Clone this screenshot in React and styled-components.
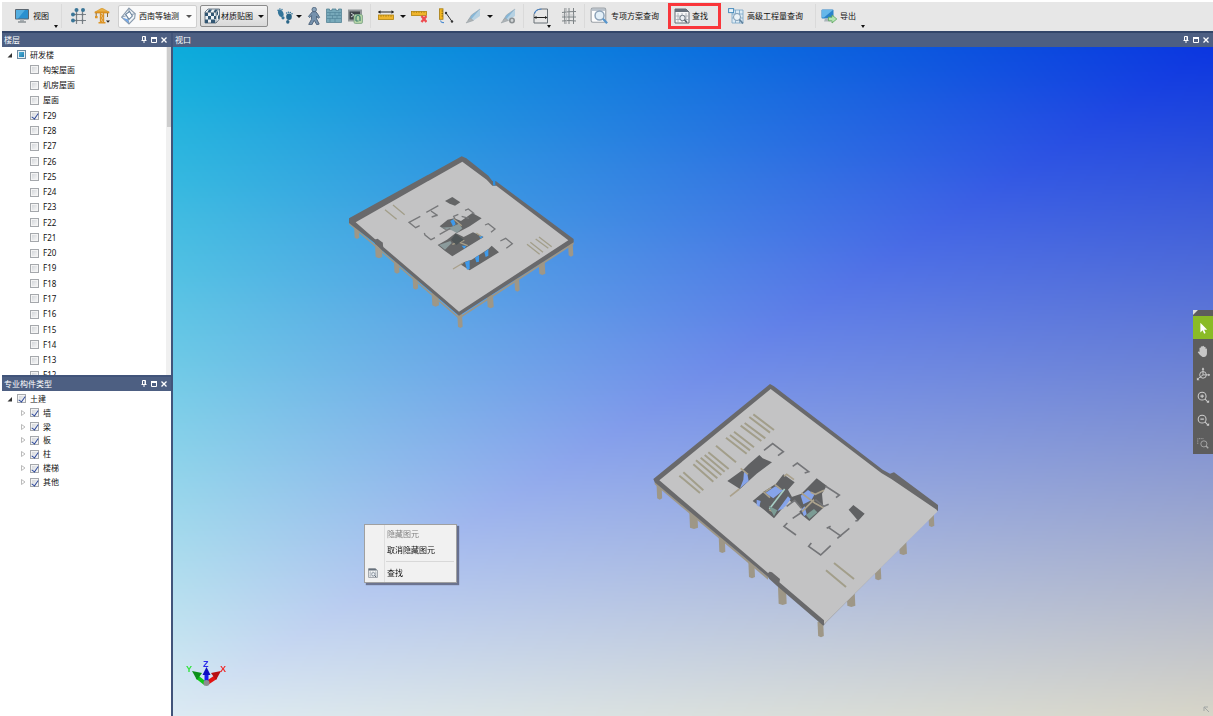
import React, { useLayoutEffect, useRef } from "react";
import styled, { createGlobalStyle } from "styled-components";

const floors = ["构架屋面", "机房屋面", "屋面"];
for (let n = 29; n >= 12; n--) floors.push(`F${n}`);

const parts = ["墙", "梁", "板", "柱", "楼梯", "其他"];

/* ---------- icons ---------- */

const Icon = ({ children, size = 16 }) => (
  <svg width={size} height={size} viewBox="0 0 16 16" fill="none" aria-hidden="true">
    {children}
  </svg>
);

const MonitorIcon = () => (
  <Icon>
    <rect x="1" y="1" width="14" height="10.5" rx="1" fill="#5b6670" />
    <rect x="2" y="2" width="12" height="8.5" fill="#2a90cf" />
    <path d="M2 2h9l-7 8.500H2z" fill="#53aee0" />
    <path d="M6 11.5h4v2H6z" fill="#aab0b4" />
    <path d="M4 14h8" stroke="#848b90" strokeWidth="1.4" />
  </Icon>
);

const AxisGridIcon = () => (
  <Icon>
    <path d="M5.5 3v13M11.5 3v13M2 6.5h13M2 12.5h13" stroke="#7d8489" strokeWidth="1.2" />
    <g fill="#3a7597">
      <circle cx="5.5" cy="2" r="2" />
      <circle cx="12" cy="2" r="2" />
      <circle cx="2" cy="6.5" r="2" />
      <circle cx="2" cy="12.5" r="2" />
    </g>
    <g fill="#6d757b">
      <circle cx="5.5" cy="6.5" r="1" />
      <circle cx="11.5" cy="6.5" r="1" />
      <circle cx="5.5" cy="12.5" r="1" />
      <circle cx="11.5" cy="12.5" r="1" />
    </g>
  </Icon>
);

const CraneIcon = () => (
  <Icon>
    <path d="M6.5 3v12M9.5 3v12M6.5 6l3 2-3 2 3 2-3 2" stroke="#dd9425" strokeWidth="1.3" />
    <path d="M8 0L.8 4.2h14.4z" fill="#eab044" stroke="#d08e22" strokeWidth=".6" />
    <path d="M.8 4.5h14.4" stroke="#d9901f" strokeWidth="1.7" />
    <path d="M2.2 5v3.4M13.5 5v4" stroke="#8b6b35" />
    <path d="M1 8h2.6v2.2H1zM4.5 14h7v1.6h-7z" fill="#dd9425" />
    <path d="M12 12.5h4l-2 2.3z" fill="#222" />
  </Icon>
);

const IsoViewIcon = () => (
  <Icon size={18}>
    <path d="M8 1l5.500 5-.5 4L8 15 1.500 9z" fill="#f1f5f8" stroke="#8a9bad" />
    <path d="M8 1v6l5.500-1M8 7l-1 4 1 4M8 7L1.500 9" stroke="#8a9bad" strokeWidth=".9" />
    <path d="M2 9.300L7 11l1 3.500z" fill="#6ca4ea" />
    <path d="M5 6.500L8.500 4l2.500 4-3 3z" fill="#fff" stroke="#65809c" strokeWidth=".9" />
  </Icon>
);

const TextureIcon = () => (
  <Icon>
    <path d="M4 1h11.5v10L12 15H1V4z" fill="#eef2f5" stroke="#4c5e6d" strokeWidth=".8" />
    <path
      d="M1 5h3v3H1zM7 5h3v3H7zM4 8h3v3.5H4zM1 11.5h3V15H1zM7 11.5h4V15H7zM10 8h2v3h-2zM12.5 4.500L14 3v3.500L12.500 8zM14 8l1.500-1.500V10L14 11.500zM5 1.5h3L6.5 4h-3zM11 1.5h3L12 4H9.500z"
      fill="#315673"
    />
    <path d="M12 4.5V15M12 4.500L15.500 1M1 4.5h11" stroke="#4c5e6d" strokeWidth=".6" />
  </Icon>
);

const FootprintIcon = () => (
  <Icon>
    <ellipse cx="3.8" cy="5.4" rx="2.6" ry="3.6" transform="rotate(-22 3.8 5.4)" fill="#34759a" />
    <circle cx="6" cy="9.8" r="1.6" fill="#34759a" />
    <ellipse cx="12" cy="8.8" rx="2.8" ry="3.3" fill="#2b6688" />
    <ellipse cx="10.8" cy="13.8" rx="1.7" ry="1.9" fill="#2b6688" />
    <g fill="#34759a">
      <circle cx="1.2" cy="2.3" r=".9" />
      <circle cx="2.9" cy="1.1" r=".8" />
      <circle cx="5" cy="1.5" r=".7" />
      <circle cx="9.6" cy="5" r=".8" />
      <circle cx="11.4" cy="4.2" r=".8" />
      <circle cx="13.3" cy="4.5" r=".8" />
      <circle cx="15" cy="5.8" r=".8" />
    </g>
  </Icon>
);

const PersonIcon = () => (
  <Icon size={18}>
    <circle cx="8.200" cy="2.3" r="2" fill="#8aa4bb" stroke="#4b6179" strokeWidth=".7" />
    <path
      d="M6.500 4.200h3.200l1.500 2 1.800 3-1.200.8-1.600-2 .1 2.500 2.300 4.700-2 .7-2.400-4-2.200 4-2.700-.4 2.400-4.400.2-3.500-1.800 1.800-1-1z"
      fill="#7692ad"
      stroke="#4b6179"
      strokeWidth=".8"
    />
  </Icon>
);

const WallIcon = () => (
  <Icon>
    <path d="M.5 1h3v1.500H6V1h4v1.500h2.500V1h3v13.500H.5z" fill="#77a9ba" stroke="#548396" strokeWidth=".8" />
    <path
      d="M1 4.500h14M1 7.500h14M1 10.500h14M4 4.500v3M9 4.500v3M13 4.500v3M6.500 7.500v3M11 7.500v3M4 10.500V14M9 10.500V14"
      stroke="#4e8095"
      strokeWidth=".6"
    />
  </Icon>
);

const SnapshotIcon = () => (
  <Icon>
    <rect x="1" y="1.5" width="14" height="12" fill="#92979a" />
    <rect x="2.5" y="3.5" width="10.5" height="8" fill="#3d4348" />
    <path d="M4 5l3 2-3 2" stroke="#cdd3d6" />
    <rect x="7" y="6.500" width="8.500" height="9" rx="1.500" fill="#b4d3a6" stroke="#7ba587" strokeWidth=".8" />
    <path d="M9 13V9.500a2 2 0 014 0V13M9 13h2.500" stroke="#3f8271" strokeWidth="1.2" />
  </Icon>
);

const RulerIcon = () => (
  <Icon>
    <path d="M.5 4h15" stroke="#222" />
    <path d="M0 4l2.500-1.700v3.400zM16 4l-2.500-1.700v3.400z" fill="#222" />
    <rect x=".5" y="7" width="15" height="4.500" fill="#f0b52c" stroke="#b2820b" strokeWidth=".8" />
    <path d="M3 7v2M5.500 7v1.500M8 7v2M10.500 7v1.500M13 7v2" stroke="#a37c16" strokeWidth=".7" />
  </Icon>
);

const RulerRemoveIcon = () => (
  <Icon>
    <rect x=".5" y="3.5" width="15" height="4" fill="#f0b52c" stroke="#b2820b" strokeWidth=".8" />
    <path d="M3 3.500v1.500M5.500 3.500v1.500M8 3.500v1.500M10.500 3.500v1.500M13 3.500v1.500" stroke="#a37c16" strokeWidth=".7" />
    <path d="M10.500 8l5 6M15.500 8l-5 6" stroke="#ee4b50" strokeWidth="2.400" />
  </Icon>
);

const MeasureIcon = () => (
  <Icon>
    <rect x="1.500" y=".8" width="3.500" height="10.500" fill="#f4b71f" stroke="#a37b13" strokeWidth=".8" />
    <path d="M3.500 3H5M3.500 5.500H5M3.500 8H5" stroke="#7e6114" strokeWidth=".8" />
    <path d="M2.500 12.500q.5 2.500 3.500 2" stroke="#4b8bd0" strokeWidth="1.1" />
    <path d="M8 5l6 8.500" stroke="#333" />
    <circle cx="8" cy="5" r="1.200" fill="#333" />
    <circle cx="14" cy="13.500" r="1.200" fill="#333" />
  </Icon>
);

const BladeIcon = ({ gear }) => (
  <Icon>
    <path d="M15 1L6.500 7 3 12.500l5-1z" fill="#86b7d8" stroke="#93a2ad" strokeWidth=".6" />
    <path d="M15 1v7l-6.500 4.500L1 15l5-3.500z" fill="#b6d1e2" />
    <path d="M1 15l4-5 3.500 2.500z" fill="#adb2b5" stroke="#9aa0a3" strokeWidth=".5" />
    {gear && <circle cx="12" cy="12.5" r="2.200" fill="#d2d6d8" stroke="#8b9194" strokeWidth="1.600" />}
  </Icon>
);

const ArcIcon = () => (
  <Icon>
    <path d="M1 15V6.500Q2 1 9 1h5.500v14z" stroke="#687076" />
    <path d="M1.500 5.500Q3 1.200 8.500 1" stroke="#4a87cc" strokeWidth="1.2" />
    <path d="M1 9.500h13" stroke="#222" />
    <path d="M1 9.500l2.500-1.500v3zM14.500 9.500L12 8v3z" fill="#222" />
  </Icon>
);

const MeshIcon = () => (
  <Icon>
    <path d="M4 0q-1 8 0 16M8 0v16M12.500 0v16M1 4.500q6-1 14-1M1 9h14M1 13q7-1 14 0" stroke="#7d8386" />
    <path d="M5.500 0v16M1 7h13" stroke="#b2b5b7" strokeWidth=".7" />
  </Icon>
);

const PlanSearchIcon = () => (
  <Icon size={18}>
    <rect x="1" y="1" width="13" height="12.5" rx="1.500" fill="#fdfdfd" stroke="#9aa0a6" />
    <rect x="1.500" y="1.500" width="12" height="2" fill="#b9c2cb" />
    <circle cx="8.500" cy="7.500" r="4" fill="#e2eff8" stroke="#8ba1b7" strokeWidth="1.300" />
    <path d="M11.500 10.500l3.700 4" stroke="#5795cc" strokeWidth="2" />
  </Icon>
);

const FindIcon = ({ size }) => (
  <Icon size={size}>
    <path d="M1 1h11l3 3v11H1z" fill="#f5f6f7" stroke="#656d77" />
    <path d="M1 1h11l2.500 3H1z" fill="#66707c" />
    <path d="M4 5v10M8 5v10M12 5v10M1 8h14M1 11.500h14" stroke="#a3abb3" strokeWidth=".8" />
    <circle cx="8.500" cy="10" r="2.700" fill="#ecf0f4" stroke="#6b7783" />
    <path d="M10.500 12l2.500 2.500" stroke="#505c68" strokeWidth="1.500" />
  </Icon>
);

const QuantityIcon = () => (
  <Icon>
    <path d="M4 2h11v13H4z" fill="#dcebf5" stroke="#78a5c5" strokeWidth=".8" />
    <path d="M7.500 2v13M11.500 2v13M4 6h11M4 10h11" stroke="#78a5c5" strokeWidth=".8" />
    <rect x=".6" y=".6" width="5" height="4" fill="#e8f3fa" stroke="#4b8dbc" />
    <circle cx="9" cy="9" r="3.500" fill="#ebf3f8" stroke="#7e9ab2" />
    <path d="M11.500 11.500l3.500 4" stroke="#61839f" strokeWidth="1.700" />
  </Icon>
);

const ExportIcon = () => (
  <Icon>
    <rect x=".5" y="1.500" width="12" height="9" rx="1" fill="#2a83ca" />
    <path d="M1 2h11L3 9.500H1z" fill="#65b7ea" />
    <path d="M4 10.500h5l1 3H3z" fill="#a9b4ba" />
    <path d="M7.500 9.200H11V7l4.800 4-4.800 4v-2.200H7.500z" fill="#b2e5b0" stroke="#5ca35e" strokeWidth=".8" />
  </Icon>
);

const PinIcon = () => (
  <svg width="6" height="8" viewBox="0 0 6 8" fill="none" aria-hidden="true">
    <path d="M1.500 4V.5h3V4M4 .5V4M.5 4.500h5M3 4.500V7" stroke="#fff" />
  </svg>
);

const RestoreIcon = () => (
  <svg width="6" height="6" viewBox="0 0 6 6" fill="none" aria-hidden="true">
    <path d="M.5 1h5v4.500h-5z" stroke="#fff" />
    <path d="M0 1h6" stroke="#fff" strokeWidth="2" />
  </svg>
);

const CloseIcon = () => (
  <svg width="6" height="6" viewBox="0 0 6 6" fill="none" aria-hidden="true">
    <path d="M.5.5l5 5M5.5.5l-5 5" stroke="#fff" strokeWidth="1.3" />
  </svg>
);

const Twisty = ({ open }) => (
  <svg width="6" height="6" viewBox="0 0 6 6" fill="none" aria-hidden="true">
    {open ? <path d="M5 1v4.500H.5z" fill="#333" /> : <path d="M1.500.5l3.500 2.500-3.500 2.500z" fill="#fff" stroke="#aaa" strokeWidth=".8" />}
  </svg>
);

/* ---------- viewport scene ---------- */

const corners = {
  tl: [12, 172, 219],
  tr: [11, 54, 224],
  bl: [220, 234, 243],
  br: [215, 213, 200]
};

// two gouraud triangles that share the top-right / bottom-left edge
const paintSky = canvas => {
  const { width: w, height: h } = canvas;
  const ctx = canvas.getContext("2d");
  const image = ctx.createImageData(w, h);
  const { tl, tr, bl, br } = corners;
  for (let y = 0; y < h; y++) {
    for (let x = 0; x < w; x++) {
      const u = x / (w - 1);
      const v = y / (h - 1);
      const at = (y * w + x) * 4;
      for (let c = 0; c < 3; c++) {
        image.data[at + c] =
          u + v < 1
            ? tl[c] + u * (tr[c] - tl[c]) + v * (bl[c] - tl[c])
            : br[c] + (1 - u) * (bl[c] - br[c]) + (1 - v) * (tr[c] - br[c]);
      }
      image.data[at + 3] = 255;
    }
  }
  ctx.putImageData(image, 0, 0);
};

const DARK = "#69696b";
const LIGHT = "#c3c3c4";
const TAN = "#9e9787";
const BEAM = "#a29e8a";

const Columns = ({ items }) =>
  items.map(([x, y1, y2, w]) => (
    <path key={x} d={`M${x - w / 2} ${y1}H${x + w / 2}L${x + w / 2 + 2} ${y2 - 4}L${x + 2} ${y2}L${x - w / 2 + 2} ${y2 - 4}Z`} fill={TAN} />
  ));

const UpperSlab = () => (
  <g transform="translate(335 145) scale(.33333)">
    <Columns
      items={[
        [64, 240, 282, 14],
        [130, 298, 340, 20],
        [184, 345, 386, 15],
        [240, 392, 434, 15],
        [300, 442, 485, 20],
        [374, 506, 549, 14],
        [465, 450, 490, 18],
        [545, 400, 440, 14],
        [620, 350, 390, 18],
        [706, 290, 335, 14]
      ]}
    />
    <path d="M42 232L372 516 716 290V298L372 522 42 238Z" fill={TAN} />
    <path d="M42 220L380 34 394 40 460 92 472 108H482L716 282V292L372 512 140 315 120 295 42 234Z" fill={DARK} />
    <path d="M62 232L382 50 455 104 472 122H484L700 286 372 500 145 306 142 292 122 284Z" fill={LIGHT} />
    <path d="M474 104L481 108V122L474 120Z" fill="#2c8edf" />
    <path d="M118 284L128 281 143 293V314L120 296Z" fill={DARK} />
    <path
      d="M150 194L185 223M174 180L209 209M576 298L614 328M586 292L624 322M602 282L640 310M612 276L650 305"
      stroke={BEAM}
      strokeWidth="4"
    />
    <g fill="#646566">
      <path d="M330 168L352 156 376 172 360 182 344 176Z" />
      <path d="M314 244L338 224 358 220 378 228 412 204 440 220 404 244 366 264 350 252 330 254Z" />
      <path d="M308 300L336 284 362 264 386 276 414 262 446 276 352 334 330 318Z" />
      <path d="M376 358L390 350 410 344 460 312 470 302 492 322 404 376Z" />
    </g>
    <g fill="#3e9aeb">
      <path d="M346 228L356 222 362 238 354 244Z" />
      <path d="M380 302L394 302 388 312ZM432 274L444 274 438 282Z" />
      <path d="M390 352L404 346 404 372 396 374ZM420 338L432 330 432 350 424 352ZM448 322L460 312 460 332 452 336Z" />
    </g>
    <g fill="#8b9b9c">
      <path d="M318 248L348 246 372 236 382 250 366 264 350 256Z" />
      <path d="M312 300L346 288 350 294 330 314Z" />
    </g>
    <path
      d="M356 222L380 242M352 298L388 286M424 264L438 274M354 372L384 354M374 292L398 302"
      stroke="#a9a08a"
      strokeWidth="4"
    />
    <path
      d="M274 202L310 182M288 198L308 212M290 216L308 210M256 214L222 232 242 248 254 242M268 264L270 270 288 284 300 278M390 196L400 192 418 206M450 240L460 236 480 252 468 262M496 288L512 280 532 296 514 310M314 268L346 250M360 222L356 214 370 208M380 214L402 220"
      stroke="#77787a"
      strokeWidth="4"
      fill="none"
    />
    <path d="M348 284L362 266 386 284 364 300Z" fill="#4e5557" />
  </g>
);

const LowerSlab = () => (
  <g transform="translate(640 375) scale(.33333)">
    <Columns
      items={[
        [57, 325, 374, 15],
        [160, 412, 462, 24],
        [245, 480, 534, 18],
        [334, 560, 610, 18],
        [426, 635, 690, 24],
        [541, 740, 787, 17],
        [873, 410, 456, 16],
        [788, 500, 540, 22],
        [713, 575, 616, 18],
        [632, 650, 696, 24]
      ]}
    />
    <path d="M44 320L384 606V614L44 328Z" fill={TAN} />
    <path d="M40 312L390 27 402 34 728 284 750 296 762 292 894 390V406L560 740 550 752 412 634 388 612 384 606 44 322Z" fill={DARK} />
    <path d="M58 316L392 42 724 294 754 312 890 404 892 410 552 748V736L418 622V612L390 590 384 594Z" fill={LIGHT} />
    <path d="M388 590L396 592 420 612 416 628 388 608Z" fill={DARK} />
    <path
      d="M118 302L180 354M130 292L190 346M160 268L220 320M168 256L232 310M182 248L244 300M194 240L254 290M205 232L266 282M228 212L288 262M258 188L320 236M270 180L330 226M282 170L342 217M302 152L364 198M314 144L376 190M328 126L390 173M340 118L402 165M582 564L642 612M558 586L618 636"
      stroke={BEAM}
      strokeWidth="6"
    />
    <g fill="#606163">
      <path d="M262 318L312 282 326 268 358 240 368 250 396 262 350 296 326 318 300 342Z" />
      <path d="M338 378L374 348 408 326 430 298 464 322 444 344 456 366 402 430 374 406Z" />
      <path d="M444 370L484 356 530 310 560 332 546 356 550 398 508 438 486 420Z" />
      <path d="M640 390L674 416 654 438 648 430 626 404Z" />
    </g>
    <g fill="#86a4ea">
      <path d="M312 290L322 296 326 318 300 340 310 314Z" />
      <path d="M376 354L406 334 430 346 400 370ZM350 374L362 378 358 396 350 390ZM412 408L444 364 452 372 432 400Z" />
      <path d="M482 362L504 345 524 358 514 376 490 388ZM484 404L494 394 500 418 492 424Z" />
    </g>
    <path
      d="M270 364L298 342M302 280L324 298M376 350L394 338M404 328L424 344M432 304L440 298 462 314M388 404L404 412M484 354L524 384 550 398M512 352L526 358 552 346M486 410L522 374M370 350L390 368"
      stroke="#aaa18c"
      strokeWidth="5"
      fill="none"
    />
    <path d="M388 402L434 342" stroke="#a7cdc4" strokeWidth="5" />
    <path d="M386 392L412 406 402 424ZM498 420L522 402 532 412 508 432Z" fill="#7b9b94" />
    <path d="M430 398L466 378 486 402 458 430Z" fill={LIGHT} />
    <path
      d="M372 226L398 206 430 230 414 242M458 274L472 264 506 290 494 294M556 333L598 360 588 368M526 374L552 394 566 388M440 394L464 376 484 400M458 430L482 414M442 444L432 454 468 480M514 504L506 514 542 540 572 512M560 460L572 454M566 458L604 484M592 490L628 460M654 436L646 438"
      stroke="#747578"
      strokeWidth="5"
      fill="none"
    />
  </g>
);

const AxisTriad = () => (
  <g>
    <path d="M206 684L197 677" stroke="#10c818" strokeWidth="4" />
    <path d="M192 671L202 673 197 680Z" fill="#0b8f1a" />
    <path d="M207 683L216 677" stroke="#e21313" strokeWidth="4" />
    <path d="M221 671L211 673 216 680Z" fill="#b80f12" />
    <path d="M206.500 684V673" stroke="#1717ee" strokeWidth="4" />
    <path d="M206.500 667L202.500 675H210.500Z" fill="#0d0dc2" />
    <circle cx="206.500" cy="683" r="3" fill="#8b8d90" />
    <g fontFamily="Liberation Sans, sans-serif" fontSize="9" fontWeight="bold">
      <text x="186" y="672" fill="#2fe33b">Y</text>
      <text x="203" y="667" fill="#2b2bea">Z</text>
      <text x="220" y="672" fill="#ef2b2b">X</text>
    </g>
  </g>
);

const navTools = [
  ["选择", <path d="M5 2v11l2.600-2.300 1.700 3.800 1.700-.8-1.700-3.600h3.500z" fill="#fff" />],
  [
    "平移",
    <path
      d="M4 8V4.500q.8-1 1.500 0V3q.9-1 1.700 0v-.5q1-1 1.900 0V3.500q1-.9 1.800 0v2q.9-.8 1.600 0V11q-.3 3.500-3.500 3.800H7.500Q5 14 2 9.500q.5-1.500 2-.5z"
      fill="#c6c6c6"
    />
  ],
  [
    "动态观察",
    <g stroke="#ccc" strokeWidth="1.1">
      <circle cx="8" cy="9" r="3.800" />
      <path d="M8 9V1M8 9h8M8 9l-6.500 5" />
      <path d="M6.500 3L8 .5 9.500 3zM14 7.500L16 9l-2 1.500zM1 12v3h3z" fill="#ccc" stroke="none" />
    </g>
  ],
  [
    "放大",
    <g stroke="#ccc" strokeWidth="1.2">
      <circle cx="7" cy="7" r="4.500" />
      <path d="M5 7h4M7 5v4M10.500 10.500l3 3" />
      <path d="M12 14.500h3v-3z" fill="#ccc" stroke="none" />
    </g>
  ],
  [
    "缩小",
    <g stroke="#ccc" strokeWidth="1.2">
      <circle cx="7" cy="7" r="4.500" />
      <path d="M5 7h4M10.500 10.500l3 3" />
      <path d="M12 14.500h3v-3z" fill="#ccc" stroke="none" />
    </g>
  ],
  [
    "窗口缩放",
    <g stroke="#aaa" strokeWidth="1">
      <path d="M2 9V3h7" strokeDasharray="1.5 1" />
      <circle cx="9" cy="9" r="3.500" />
      <path d="M11.500 11.500l2.500 2.500" strokeWidth="1.600" />
    </g>
  ]
];

const PaneButtons = () => (
  <PaneActions>
    <PaneAction aria-label="固定">
      <PinIcon />
    </PaneAction>
    <PaneAction aria-label="还原">
      <RestoreIcon />
    </PaneAction>
    <PaneAction aria-label="关闭">
      <CloseIcon />
    </PaneAction>
  </PaneActions>
);

const App = () => {
  const sky = useRef(null);
  const root = useRef(null);

  useLayoutEffect(() => {
    paintSky(sky.current);
    root.current.indeterminate = true;
  }, []);

  return (
    <>
      <GlobalStyle />
      <Window>
        <Toolbar>
          <Tool $corner>
            <MonitorIcon />
            视图
            <CornerCaret />
          </Tool>
          <Divider $tight />
          <Tool $space={9} aria-label="轴网">
            <AxisGridIcon />
          </Tool>
          <Tool $space={7} aria-label="塔吊">
            <CraneIcon />
          </Tool>
          <ViewPicker>
            <IsoViewIcon />
            <ViewSelect aria-label="视角" defaultValue="sw">
              <option value="sw">西南等轴测</option>
            </ViewSelect>
            <Caret $soft />
          </ViewPicker>
          <TextureButton>
            <TextureIcon />
            材质贴图
            <Caret />
          </TextureButton>
          <Tool $space={9} aria-label="漫游">
            <FootprintIcon />
            <Caret />
          </Tool>
          <Tool $space={3} aria-label="行走">
            <PersonIcon />
          </Tool>
          <Tool $space={3} aria-label="碰撞">
            <WallIcon />
          </Tool>
          <Tool $space={5} aria-label="快照">
            <SnapshotIcon />
          </Tool>
          <Divider />
          <Tool $space={7} aria-label="测量">
            <RulerIcon />
            <Caret $far />
          </Tool>
          <Tool $space={5} aria-label="删除测量">
            <RulerRemoveIcon />
          </Tool>
          <Tool $space={11} aria-label="标注">
            <MeasureIcon />
          </Tool>
          <Tool $space={11} aria-label="剖切">
            <BladeIcon />
            <Caret $far />
          </Tool>
          <Tool $space={7} aria-label="剖切设置">
            <BladeIcon gear />
          </Tool>
          <Divider />
          <Tool $space={9} $corner aria-label="净高">
            <ArcIcon />
            <CornerCaret $near />
          </Tool>
          <Tool $space={3} aria-label="钢筋">
            <MeshIcon />
          </Tool>
          <Divider />
          <Tool $space={5}>
            <PlanSearchIcon />
            专项方案查询
          </Tool>
          <FindTool>
            <FindIcon />
            查找
          </FindTool>
          <Tool $space={7}>
            <QuantityIcon />
            高级工程量查询
          </Tool>
          <Divider $wide />
          <Tool $space={5} $corner>
            <ExportIcon />
            导出
            <CornerCaret />
          </Tool>
        </Toolbar>

        <Workspace>
          <Sidebar>
            <Pane>
              <PaneTitle>
                楼层
                <PaneButtons />
              </PaneTitle>
              <FloorArea>
                <FloorTree>
                  <Row>
                    <Twisty open />
                    <Check ref={root} type="checkbox" />
                    研发楼
                  </Row>
                  {floors.map(name => (
                    <Row key={name} $child>
                      <Check type="checkbox" defaultChecked={name === "F29"} />
                      {name}
                    </Row>
                  ))}
                </FloorTree>
                <ScrollTrack>
                  <ScrollThumb />
                </ScrollTrack>
              </FloorArea>
            </Pane>
            <Pane $ruled>
              <PaneTitle>
                专业构件类型
                <PaneButtons />
              </PaneTitle>
              <PartTree>
                <Row>
                  <Twisty open />
                  <Check type="checkbox" defaultChecked />
                  土建
                </Row>
                {parts.map(name => (
                  <Row key={name} $nested>
                    <Twisty />
                    <Check type="checkbox" defaultChecked />
                    {name}
                  </Row>
                ))}
              </PartTree>
            </Pane>
          </Sidebar>

          <ViewPane>
            <PaneTitle>
              视口
              <PaneButtons />
            </PaneTitle>
            <Stage>
              <Sky ref={sky} width="520" height="335" />
              <Scene viewBox="173 47 1040 669" preserveAspectRatio="xMidYMid slice">
                <UpperSlab />
                <LowerSlab />
                <AxisTriad />
                <path d="M1204 707l5 5M1204 711v-4h4" stroke="#a3a7a6" fill="none" />
              </Scene>
              <NavBar>
                <NavHandle />
                {navTools.map(([label, drawing], i) => (
                  <NavButton key={label} aria-label={label} $active={i === 0}>
                    <Icon size={14}>{drawing}</Icon>
                  </NavButton>
                ))}
              </NavBar>
              <ContextMenu>
                <MenuItem disabled>隐藏图元</MenuItem>
                <MenuItem>取消隐藏图元</MenuItem>
                <MenuLine />
                <MenuItem>
                  <MenuGlyph>
                    <FindIcon size={10} />
                  </MenuGlyph>
                  查找
                </MenuItem>
              </ContextMenu>
            </Stage>
          </ViewPane>
        </Workspace>
      </Window>
    </>
  );
};

export default App;

const GlobalStyle = createGlobalStyle`
  * {
    box-sizing: border-box;
  }
  body {
    margin: 0;
    overflow: hidden;
    background: #fff;
  }
  body, button, select {
    font-family: "Noto Sans", "Noto Sans CJK SC", sans-serif;
    font-size: 8px;
    line-height: 12px;
    color: #111;
  }
  button {
    margin: 0;
    padding: 0;
    border: 0;
    background: none;
  }
  svg {
    display: block;
    flex: none;
  }
`;

const Window = styled.div`
  height: 100vh;
  display: flex;
  flex-direction: column;
  padding: 2px 0 0 2px;
`;

const Toolbar = styled.div`
  flex: none;
  display: flex;
  align-items: center;
  height: 29px;
  padding: 0 0 1px 12px;
  background: #e7e7e7;
`;

const Tool = styled.button`
  position: relative;
  flex: none;
  display: flex;
  align-items: center;
  gap: 3px;
  height: 24px;
  margin-left: ${props => props.$space || 0}px;
  padding-right: ${props => (props.$corner ? 9 : 0)}px;
  white-space: nowrap;
`;

const Caret = styled.span`
  flex: none;
  margin-left: ${props => (props.$far ? 3 : 0)}px;
  border: 3px solid transparent;
  border-top-color: ${props => (props.$soft ? "#555" : "#111")};
  border-bottom: 0;
`;

const CornerCaret = styled.span`
  position: absolute;
  right: ${props => (props.$near ? 7 : 0)}px;
  bottom: 0;
  border: 2px solid transparent;
  border-top: 3px solid #111;
  border-bottom: 0;
`;

const Divider = styled.span`
  flex: none;
  width: 1px;
  height: 24px;
  margin-left: ${props => (props.$tight ? 3 : props.$wide ? 12 : 7)}px;
  background: #dadada;
`;

const ViewPicker = styled.div`
  flex: none;
  display: flex;
  align-items: center;
  gap: 1px;
  width: 79px;
  height: 23px;
  margin-left: 8px;
  padding: 0 4px 0 1px;
  border: 1px solid #cfcfcf;
  border-radius: 2px;
  background: #fafafa;
`;

const ViewSelect = styled.select`
  flex: 1;
  min-width: 0;
  padding: 0;
  border: 0;
  appearance: none;
  background: none;
`;

const TextureButton = styled.button`
  flex: none;
  display: flex;
  align-items: center;
  gap: 1px;
  width: 68px;
  height: 22px;
  margin-left: 3px;
  padding: 0 3px;
  border: 1px solid #8c8c8c;
  border-radius: 2px;
  background: linear-gradient(#f4f4f4, #d9d9d9);
  white-space: nowrap;

  ${Caret} {
    margin-left: auto;
  }
`;

const FindTool = styled.button`
  flex: none;
  display: flex;
  align-items: center;
  gap: 2px;
  width: 53px;
  height: 26px;
  margin-left: 9px;
  padding-left: 3px;
  border: 3px solid #f9363b;
  white-space: nowrap;
`;

const Workspace = styled.div`
  flex: 1;
  min-height: 0;
  display: flex;
  border-top: 2px solid #334669;
`;

const Sidebar = styled.div`
  flex: none;
  display: flex;
  flex-direction: column;
  width: 171px;
  border-right: 2px solid #41547a;
`;

const Pane = styled.section`
  flex: none;
  border-top: ${props => (props.$ruled ? 2 : 0)}px solid #41547a;
`;

const PaneTitle = styled.div`
  flex: none;
  display: flex;
  align-items: center;
  justify-content: space-between;
  height: 14px;
  padding: 0 4px 0 2px;
  background: #4d5f82;
  color: #fff;
`;

const PaneActions = styled.div`
  display: flex;
  gap: 4px;
`;

const PaneAction = styled.button`
  display: flex;
  align-items: center;
  height: 10px;
`;

const FloorArea = styled.div`
  display: flex;
  height: 328px;
  overflow: hidden;
`;

const FloorTree = styled.div`
  flex: 1;
  display: grid;
  grid-template-rows: repeat(22, 1fr);
  height: 336px;
`;

const PartTree = styled.div`
  display: grid;
  grid-template-rows: repeat(7, 1fr);
  height: 98px;
  padding-top: 1px;
`;

const Row = styled.label`
  display: flex;
  align-items: center;
  gap: 4px;
  min-height: 0;
  padding-left: ${props => (props.$child ? 28 : props.$nested ? 18 : 5)}px;
`;

const Check = styled.input`
  flex: none;
  width: 9px;
  height: 9px;
  margin: 0;
  appearance: none;
  border: 1px solid #a5a8ac;
  background: linear-gradient(135deg, #cfd2d6, #fafafa);
  box-shadow: inset 0 0 0 1px #f4f4f4;

  &:checked::after {
    content: "";
    display: block;
    width: 3px;
    height: 6px;
    margin: 0 0 0 2px;
    border: solid #2b479a;
    border-width: 0 1px 1px 0;
    transform: rotate(35deg);
  }

  &:indeterminate {
    border-color: #6d8aa0;
    background: linear-gradient(135deg, #57bde4, #1673a6);
    box-shadow: inset 0 0 0 1px #e6eef3;
  }
`;

const ScrollTrack = styled.div`
  flex: none;
  width: 5px;
  background: #f0f0f0;
`;

const ScrollThumb = styled.div`
  height: 80px;
  margin-left: 1px;
  background: #cdcdcd;
`;

const ViewPane = styled.main`
  flex: 1;
  min-width: 0;
  display: flex;
  flex-direction: column;
`;

const Stage = styled.div`
  position: relative;
  flex: 1;
  min-height: 0;
  overflow: hidden;
`;

const Sky = styled.canvas`
  display: block;
  width: 100%;
  height: 100%;
`;

const Scene = styled.svg`
  position: absolute;
  top: 0;
  left: 0;
  width: 100%;
  height: 100%;
`;

const NavBar = styled.div`
  position: absolute;
  top: 263px;
  right: 0;
  width: 20px;
  background: #5d5d5d;
`;

const NavHandle = styled.div`
  height: 6px;
  background: linear-gradient(135deg, #ddd 3px, #5d5d5d 4px);
`;

const NavButton = styled.button`
  display: flex;
  align-items: center;
  justify-content: center;
  width: 100%;
  height: 23px;
  background: ${props => (props.$active ? "#8abb26" : "transparent")};
`;

const ContextMenu = styled.div`
  position: absolute;
  top: 477px;
  left: 191px;
  width: 93px;
  padding: 1px;
  border: 1px solid #a0a0a0;
  background: linear-gradient(90deg, #f1f1f1 19px, #dedede 19px, #dedede 20px, #f1f1f1 20px);
  box-shadow: 2px 2px 1px rgba(60, 60, 80, 0.6);
`;

const MenuItem = styled.button`
  position: relative;
  display: flex;
  align-items: center;
  width: 100%;
  height: 16px;
  padding-left: 21px;
  color: ${props => (props.disabled ? "#808080" : "#111")};
`;

const MenuGlyph = styled.span`
  position: absolute;
  left: 2px;
`;

const MenuLine = styled.hr`
  height: 1px;
  margin: 3px 1px 3px 20px;
  border: 0;
  background: #d8d8d8;
`;
